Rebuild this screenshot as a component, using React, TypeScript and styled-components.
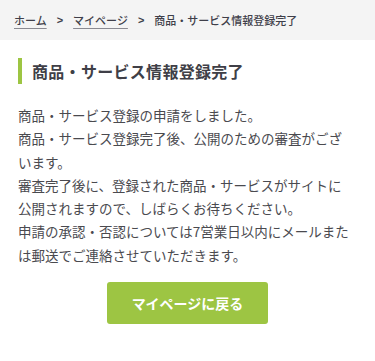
import React from "react";
import styled, { createGlobalStyle } from "styled-components";

const Global = createGlobalStyle`
  html, body { margin: 0; padding: 0; background: #fff; }
  body {
    font-family: "Noto Sans CJK JP", "Noto Sans", sans-serif;
    color: #4a4a4a;
    -webkit-font-smoothing: antialiased;
  }
  * { box-sizing: border-box; }
`;

const Page = styled.div`
  width: 375px;
  min-height: 361px;
  display: flex;
  flex-direction: column;
`;

const Breadcrumb = styled.nav`
  height: 40px;
  background: #f4f4f4;
  display: flex;
  align-items: center;
  padding: 0 14px;
  font-size: 11px;
  font-weight: 500;
  color: #3f3f4a;
`;

const Crumb = styled.a`
  color: #3f3f4a;
  text-decoration: underline;
  text-underline-offset: 3px;
  text-decoration-color: #8a8a92;
`;

const Sep = styled.span`
  margin: 0 10px 0 10px;
  font-weight: 700;
  font-family: "Liberation Sans", sans-serif;
`;

const Current = styled.span`
  color: #3f3f4a;
`;

const Main = styled.main`
  display: flex;
  flex-direction: column;
  padding: 18px 18px 0 18px;
`;

const Heading = styled.h1`
  margin: 0;
  height: 26px;
  display: flex;
  align-items: center;
  border-left: 4px solid #9dc543;
  padding-left: 10px;
  font-size: 16px;
  font-weight: 700;
  color: #3f3f47;
  letter-spacing: 0.3px;
`;

const Body = styled.p`
  margin: 20px 0 0;
  font-size: 13.5px;
  line-height: 23.25px;
  color: #4a4a4f;
  white-space: nowrap;
`;

const ButtonRow = styled.div`
  display: flex;
  justify-content: center;
  margin-top: 15px;
`;

const Button = styled.a`
  width: 161px;
  height: 42px;
  border-radius: 3px;
  background: #9dc543;
  color: #fff;
  font-weight: 700;
  font-size: 14px;
  display: flex;
  align-items: center;
  justify-content: center;
  text-decoration: none;
`;

const lines = [
  "商品・サービス登録の申請をしました。",
  "商品・サービス登録完了後、公開のための審査がござ",
  "います。",
  "審査完了後に、登録された商品・サービスがサイトに",
  "公開されますので、しばらくお待ちください。",
  "申請の承認・否認については7営業日以内にメールまた",
  "は郵送でご連絡させていただきます。",
];

export default function App() {
  return (
    <Page>
      <Global />
      <Breadcrumb>
        <Crumb href="#">ホーム</Crumb>
        <Sep>&gt;</Sep>
        <Crumb href="#">マイページ</Crumb>
        <Sep>&gt;</Sep>
        <Current>商品・サービス情報登録完了</Current>
      </Breadcrumb>
      <Main>
        <Heading>商品・サービス情報登録完了</Heading>
        <Body>
          {lines.map((l, i) => (
            <React.Fragment key={i}>
              {l}
              {i < lines.length - 1 && <br />}
            </React.Fragment>
          ))}
        </Body>
        <ButtonRow>
          <Button href="#">マイページに戻る</Button>
        </ButtonRow>
      </Main>
    </Page>
  );
}
